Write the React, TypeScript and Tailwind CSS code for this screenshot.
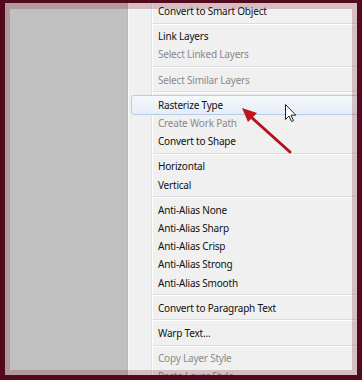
import React from 'react';

type Row = { label?: string; off?: boolean; hot?: boolean; sep?: boolean };

const rows: Row[] = [
  { label: 'Convert to Smart Object' },
  { sep: true },
  { label: 'Link Layers' },
  { label: 'Select Linked Layers', off: true },
  { sep: true },
  { label: 'Select Similar Layers', off: true },
  { sep: true },
  { label: 'Rasterize Type', hot: true },
  { label: 'Create Work Path', off: true },
  { label: 'Convert to Shape' },
  { sep: true },
  { label: 'Horizontal' },
  { label: 'Vertical' },
  { sep: true },
  { label: 'Anti-Alias None' },
  { label: 'Anti-Alias Sharp' },
  { label: 'Anti-Alias Crisp' },
  { label: 'Anti-Alias Strong' },
  { label: 'Anti-Alias Smooth' },
  { sep: true },
  { label: 'Convert to Paragraph Text' },
  { sep: true },
  { label: 'Warp Text...' },
  { sep: true },
  { label: 'Copy Layer Style', off: true },
  { label: 'Paste Layer Style', off: true },
];

const MenuRow: React.FC<{ row: Row }> = ({ row }) => {
  if (row.sep) {
    return (
      <div className="h-[7px] ml-[24px] flex flex-col justify-center">
        <div className="h-px bg-[#dcdcdc]" />
        <div className="h-px bg-white" />
      </div>
    );
  }
  return (
    <div className="relative h-[18.2px] flex items-center pl-[29px]">
      {row.hot && (
        <div className="absolute left-[2px] -right-[4px] top-[-1px] bottom-[-1px] rounded-[3px] border border-[#b6cdea] bg-gradient-to-b from-[#f5f8fc] to-[#e6edf7]" />
      )}
      <span className={`relative text-[10px] leading-none tracking-[-0.2px] ${row.off ? 'text-[#8a8a8a]' : 'text-[#111111]'}`}>
        {row.label}
      </span>
    </div>
  );
};

export default function App() {
  return (
    <div
      className="relative w-[362px] h-[380px] overflow-hidden bg-[#520a1c] pl-[5px] pt-[3px] pr-[5px] pb-[5px]"
      style={{ fontFamily: '"Noto Sans", "Open Sans", sans-serif' }}
    >
      <div className="flex h-full overflow-hidden">
        <div className="w-[123px] bg-[#c0c0c0] border-r border-[#b8b8b8]" />
        <div className="relative flex-1 bg-[#f0f0f0] border-l border-[#fafafa]">
          {/* icon gutter */}
          <div className="absolute left-[22px] top-0 bottom-0 w-px bg-[#e2e3e3]" />
          <div className="absolute left-[23px] top-0 bottom-0 w-px bg-white" />
          <div className="relative mt-[-1px]">
            {rows.map((r, i) => (
              <MenuRow key={i} row={r} />
            ))}
          </div>
        </div>
      </div>

      {/* callout arrow */}
      <svg className="absolute left-0 top-0" width="362" height="380" viewBox="0 0 362 380">
        <line x1="290" y1="152" x2="251" y2="117" stroke="#b3121d" strokeWidth="3" strokeLinecap="round" />
        <polygon points="242,108 248,122 257,113" fill="#c0141f" />
      </svg>

      {/* mouse pointer */}
      <svg className="absolute left-[285px] top-[104px]" width="12" height="19" viewBox="0 0 12 19">
        <path d="M0.5 0.5 L0.5 15.5 L4 12 L6.5 17.5 L8.5 16.6 L6 11.2 L10.8 11.2 Z" fill="#fff" stroke="#222" strokeWidth="1" strokeLinejoin="round" />
      </svg>

      {/* translucent inner frame */}
      <div className="absolute left-[5px] top-[3px] right-[5px] bottom-[5px] border-solid border-l-[5px] border-t-[6px] border-r-[5px] border-b-[5px] border-[rgba(130,40,60,0.25)]" />
    </div>
  );
}
